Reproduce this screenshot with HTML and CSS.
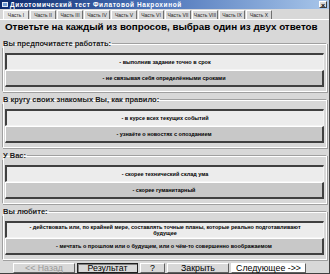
FILE: index.html
```html
<!DOCTYPE html>
<html lang="ru">
<head>
    <meta charset="UTF-8">
    <title>Дихотомический тест Филатовой Накрохиной</title>
    <link rel="stylesheet" href="styles.css">
</head>
<body>
    <div class="window">
        <!-- заголовок окна -->
        <div class="titlebar">
            <span class="title-icon"></span>
            <span class="title">Дихотомический тест Филатовой Накрохиной</span>
            <span class="close">×</span>
        </div>

        <!-- вкладки -->
        <div class="tabs">
            <span class="tab active">Часть I</span>
            <span class="tab">Часть II</span>
            <span class="tab">Часть III</span>
            <span class="tab">Часть IV</span>
            <span class="tab">Часть V</span>
            <span class="tab">Часть VI</span>
            <span class="tab">Часть VII</span>
            <span class="tab">Часть VIII</span>
            <span class="tab">Часть IX</span>
            <span class="tab">Часть X</span>
        </div>

        <div class="panel">
            <h1 class="heading">Ответьте на каждый из вопросов, выбрав один из двух ответов</h1>

            <fieldset class="group">
                <legend>Вы предпочитаете работать:</legend>
                <button class="answer first">- выполнив задание точно в срок</button>
                <button class="answer second">- не связывая себя определёнными сроками</button>
            </fieldset>

            <fieldset class="group">
                <legend>В кругу своих знакомых Вы, как правило:</legend>
                <button class="answer first">- в курсе всех текущих событий</button>
                <button class="answer second">- узнаёте о новостях с опозданием</button>
            </fieldset>

            <fieldset class="group">
                <legend>У Вас:</legend>
                <button class="answer first">- скорее технический склад ума</button>
                <button class="answer second">- скорее гуманитарный</button>
            </fieldset>

            <fieldset class="group">
                <legend>Вы любите:</legend>
                <button class="answer first">- действовать или, по крайней мере, составлять точные планы, которые реально подготавливают будущее</button>
                <button class="answer second">- мечтать о прошлом или о будущем, или о чём-то совершенно воображаемом</button>
            </fieldset>

            <!-- кнопки внизу -->
            <div class="footer">
                <button class="nav disabled">&lt;&lt; Назад</button>
                <button class="nav focused">Результат</button>
                <button class="nav small">?</button>
                <button class="nav">Закрыть</button>
                <button class="nav next">Следующее -&gt;&gt;</button>
            </div>
        </div>
    </div>
</body>
</html>
```

FILE: styles.css
```css
body {
    margin: 0;
    padding: 0;
    background-color: #d8d8d8;
    font-family: "Liberation Sans", Arial, sans-serif;
}

.window {
    width: 330px;
    height: 274px;
    box-sizing: border-box;
    background-color: #d8d8d8;
    border-bottom: 1px solid #404040;
    border-right: 1px solid #404040;
    overflow: hidden;
}

.titlebar {
    height: 9px;
    display: flex;
    align-items: center;
    padding: 0 2px;
    background: linear-gradient(to right, #0c2a6c, #4a72b8 45%, #a8c6ea);
    color: #fff;
}

.title-icon {
    width: 6px;
    height: 5px;
    margin-right: 2px;
    background: #6d9bd4;
    border: 1px solid #e0e8f4;
    box-sizing: border-box;
}

.title {
    font-size: 6.5px;
    font-weight: bold;
    letter-spacing: 0.6px;
    flex: 1;
    white-space: nowrap;
}

.close {
    width: 8px;
    height: 7px;
    line-height: 7px;
    font-size: 7px;
    font-weight: bold;
    text-align: center;
    color: #000;
    background: #d8d8d8;
    border: 1px solid;
    border-color: #fff #404040 #404040 #fff;
    box-sizing: border-box;
}

.tabs {
    display: flex;
    height: 11px;
    padding: 1px 0 0 3px;
    box-sizing: border-box;
    border-bottom: 1px solid #fff;
}

.tab {
    width: 26px;
    margin-right: 1px;
    box-sizing: border-box;
    font-size: 5px;
    line-height: 9px;
    text-align: center;
    white-space: nowrap;
    color: #222;
    border: 1px solid;
    border-color: #fff #707070 transparent #fff;
    border-bottom: none;
}

.tab.active {
    background: #e4e4e4;
}

.panel {
    padding: 0 2px;
}

.heading {
    margin: 1px 0 6px 3px;
    font-size: 9.8px;
    font-weight: bold;
    line-height: 12px;
    white-space: nowrap;
    color: #000;
}

.group {
    margin: 0 0 3px 0;
    padding: 5px 2px 4px 2px;
    border: 1px solid;
    border-color: #a0a0a0 #fff #fff #a0a0a0;
    box-shadow: inset 1px 1px 0 #fff, 1px 1px 0 #a0a0a0;
    display: flex;
    flex-direction: column;
}

.group legend {
    padding: 0 1px;
    margin-left: -3px;
    font-size: 7.5px;
    font-weight: bold;
    color: #202020;
}

.answer {
    height: 17px;
    margin: 0;
    padding: 0 14px;
    font-family: "Liberation Sans", Arial, sans-serif;
    font-size: 5.5px;
    font-weight: bold;
    color: #000;
    border: 1px solid;
    box-sizing: border-box;
    line-height: 6px;
}

.answer.first {
    background: #ececec;
    border-color: #404040 #f4f4f4 #f4f4f4 #404040;
    border-width: 2px 1px 1px 2px;
}

.answer.second {
    background: #c8c8c8;
    border-color: #fff #404040 #404040 #fff;
    border-width: 1px 2px 2px 1px;
}

.footer {
    display: flex;
    gap: 2px;
    padding: 0 0 0 11px;
}

.nav {
    height: 10px;
    width: 62px;
    padding: 0;
    font-family: "Liberation Sans", Arial, sans-serif;
    font-size: 8.8px;
    line-height: 8px;
    color: #000;
    background: #d8d8d8;
    border: 1px solid;
    border-color: #fff #606060 #606060 #fff;
}

.nav.disabled {
    color: #9a9a9a;
}

.nav.focused {
    width: 61px;
    border: 1px solid #202020;
    box-shadow: inset 1px 1px 0 #808080;
}

.nav.small {
    width: 25px;
}

.nav.next {
    width: 75px;
    background: #fff;
}
```
